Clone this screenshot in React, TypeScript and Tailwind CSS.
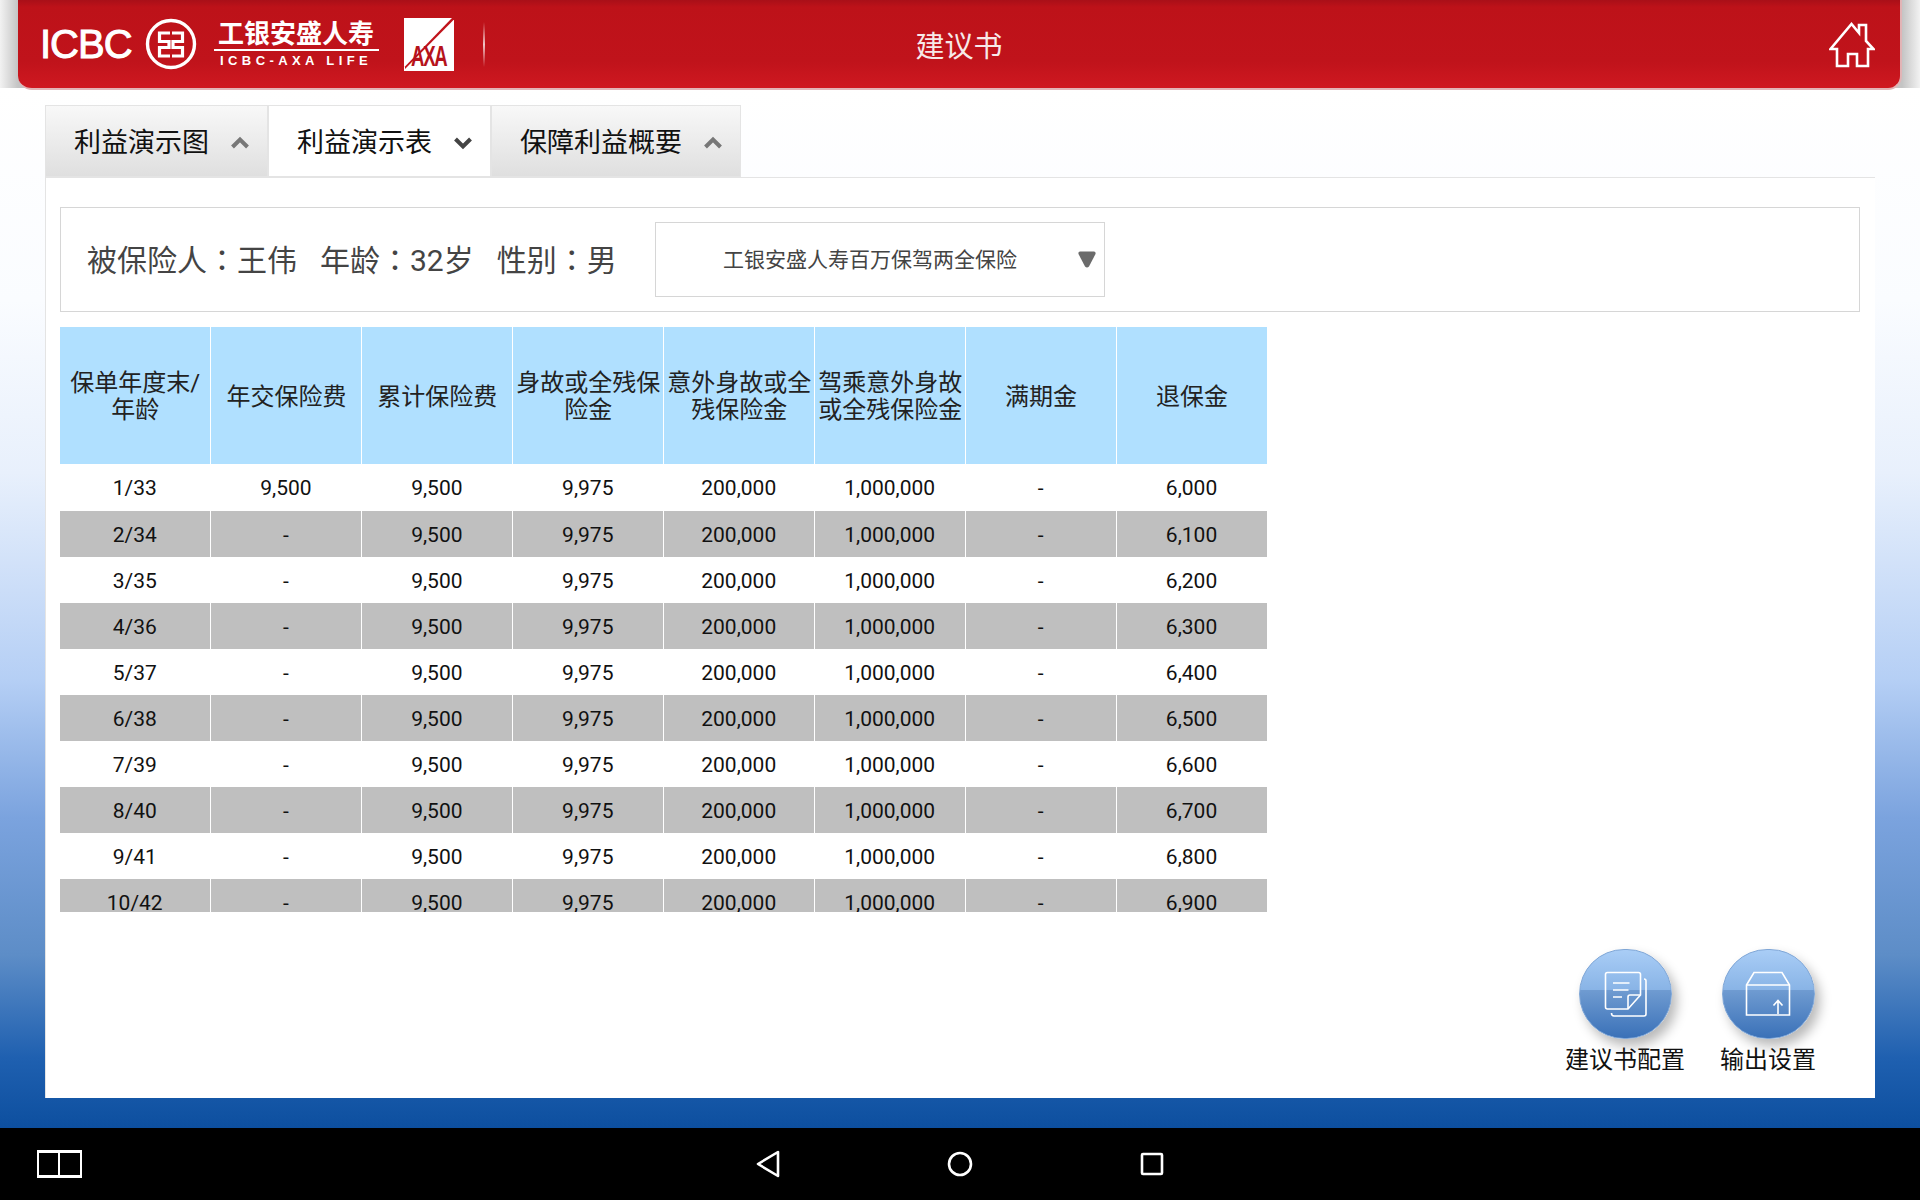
const cjk = "font-['Roboto','Noto_Sans_CJK_SC',sans-serif]";

const columns = [
  <>保单年度末/<br />年龄</>,
  "年交保险费",
  "累计保险费",
  "身故或全残保险金",
  "意外身故或全残保险金",
  "驾乘意外身故或全残保险金",
  "满期金",
  "退保金",
];

const rows = Array.from({ length: 10 }, (_, i) => [
  `${i + 1}/${i + 33}`,
  i === 0 ? "9,500" : "-",
  "9,500",
  "9,975",
  "200,000",
  "1,000,000",
  "-",
  (6000 + i * 100).toLocaleString("en-US"),
]);

const tabs = [
  { label: "利益演示图", active: false, w: "w-[223px]" },
  { label: "利益演示表", active: true, w: "w-[223px]" },
  { label: "保障利益概要", active: false, w: "w-[250px]" },
];

function Chevron({ down }: { down: boolean }) {
  return (
    <svg width="20" height="14" viewBox="0 0 20 14" className={down ? "text-[#444]" : "text-[#777]"}>
      <path d={down ? "M2.5 3 10 10.500 17.500 3" : "M2.5 11 10 3.500 17.500 11"} fill="none" stroke="currentColor" strokeWidth="4" />
    </svg>
  );
}

function IcbcSeal() {
  return (
    <svg width="52" height="52" viewBox="0 0 52 52" fill="none" stroke="white">
      <circle cx="26" cy="26" r="23.5" strokeWidth="3.4" />
      <path d="M25 15H14.500V23.500H24V29.500H14.500V38H25M27 15H37.500V23.500H28V29.500H37.500V38H27" strokeWidth="3.2" />
    </svg>
  );
}

function HomeIcon() {
  return (
    <svg width="46" height="46" viewBox="0 0 46 46" fill="none" stroke="white" strokeWidth="2.6" className="mt-[2px]">
      <path d="M1.5 27 22.500 2 30 11V3H37V19L44.500 27 39 27V44H28V32H19V44H8V27Z" />
    </svg>
  );
}

function NotesIcon() {
  return (
    <svg width="46" height="46" viewBox="0 0 46 46" fill="none" stroke="white" strokeWidth="1.6">
      <path d="M3.500 3.500Q3.500 1.500 5.500 1.500H36.500Q38.500 1.500 38.500 3.500V24L26 38H5.500Q3.500 38 3.500 36Z" />
      <path d="M38.500 24H28Q26 24 26 26V38" />
      <path d="M42 8Q44 8 44 10V43Q44 45 42 45H12Q9.500 45 9.500 42" />
      <path d="M11 12H27.500M11 19H26.500M11 26H20" />
    </svg>
  );
}

function BoxIcon() {
  return (
    <svg width="46" height="46" viewBox="0 0 46 46" fill="none" stroke="white" strokeWidth="1.6">
      <path d="M1.500 14 9 1.500H37L44.500 14V44H1.500Z" />
      <path d="M1.500 14H44.500" />
      <path d="M33 43V30M28.500 34.500 33 29.500 37.500 34.500" />
    </svg>
  );
}

function ActionButton({ label, children }: { label: string; children: React.ReactNode }) {
  return (
    <div className="flex flex-col items-center">
      <div className="flex h-[90px] w-[93px] items-center justify-center rounded-full border border-[#7fa6d6] bg-[linear-gradient(180deg,#a9cdf6_0%,#89b4e6_45%,#6f9bd1_46%,#3a71b8_100%)] shadow-[5px_7px_12px_rgba(0,0,0,0.28)]">
        {children}
      </div>
      <span className="mt-[6px] text-[24px] leading-[30px] text-[#111]">{label}</span>
    </div>
  );
}

export default function App() {
  return (
    <div className={`${cjk} flex h-[1200px] w-[1920px] flex-col overflow-hidden bg-[linear-gradient(180deg,#ffffff_88px,#fafcff_300px,#e8f0fc_473px,#b5cff5_680px,#7ba3de_818px,#5d8dc7_955px,#1f60b0_1058px,#0d4f9f_1128px)]`}>
      {/* top bar */}
      <div className="h-[88px] shrink-0 bg-[linear-gradient(90deg,#f2f2f2_0px,#c4c4c4_18px,#c4c4c4_1902px,#f2f2f2_1920px)] px-[18px]">
        <header className="relative flex h-[90px] items-center rounded-b-[14px] border-b-2 border-r-2 border-[#e2b4b6] bg-[linear-gradient(180deg,#a90f18_0%,#bd1219_8%,#c0131b_70%,#cf1820_100%)]">
          <div className="ml-[22px] flex items-center">
            <span className="font-['Liberation_Sans',sans-serif] text-[40px] leading-none tracking-[-1px] text-white [-webkit-text-stroke:1px_white]">ICBC</span>
            <div className="ml-[13px]"><IcbcSeal /></div>
            <div className="ml-[17px] flex w-[165px] flex-col items-center text-white">
              <span className="text-[26px] font-bold leading-[29px]">工银安盛人寿</span>
              <span className="h-[2px] w-full bg-white" />
              <span className="mt-[3px] font-['Liberation_Sans',sans-serif] text-[13px] font-bold leading-[14px] tracking-[4.4px]">ICBC-AXA LIFE</span>
            </div>
            <div className="relative ml-[25px] h-[53px] w-[50px] overflow-hidden bg-white">
              <svg width="50" height="53" viewBox="0 0 50 53" className="absolute inset-0">
                <path d="M50 0V1.500L1 51V48.500L48 0Z" fill="#c0131b" />
              </svg>
              <span className="absolute left-[7px] top-[23px] origin-left scale-x-[0.62] font-['Liberation_Sans',sans-serif] text-[30px] font-bold leading-[30px] tracking-[-2px] text-[#b5121b]">AXA</span>
            </div>
            <div className="ml-[29px] h-[45px] w-[2px] bg-[linear-gradient(180deg,rgba(255,255,255,0)_0%,rgba(255,255,255,0.75)_50%,rgba(255,255,255,0)_100%)]" />
          </div>
          <h1 className="absolute left-1/2 top-[25px] -translate-x-1/2 text-[29px] font-normal leading-[44px] text-[#f7e9e9]">建议书</h1>
          <div className="ml-auto mr-[25px]"><HomeIcon /></div>
        </header>
      </div>

      <main className="mx-[45px] mt-[17px] flex min-h-0 flex-1 flex-col">
        <div className="flex h-[72px] shrink-0">
          {tabs.map((t) => (
            <div
              key={t.label}
              className={`${t.w} flex items-center justify-between border border-[#e4e4e4] pl-[28px] pr-[17px] pt-[4px] ${t.active ? "bg-white" : "bg-[linear-gradient(180deg,#f8f8f8_0%,#dfdfdf_100%)]"}`}
            >
              <span className="text-[27px] leading-none text-[#111]">{t.label}</span>
              <Chevron down={t.active} />
            </div>
          ))}
        </div>

        <section className="flex min-h-0 flex-1 flex-col border-l border-t border-[#e4e4e4] bg-white pl-[14px] pr-[15px] pt-[29px]">
          <div className="flex h-[105px] shrink-0 items-center border border-[#d6d6d6] pl-[26px]">
            <p className="flex w-[531px] gap-[23px] whitespace-nowrap pt-[2px] font-['Roboto','Noto_Sans_CJK_TC',sans-serif] text-[30px] text-[#444]">
              <span>被保险人：王伟</span>
              <span>年龄：32岁</span>
              <span>性别：男</span>
            </p>
            <div className="relative ml-[37px] flex h-[75px] w-[450px] items-center border border-[#d6d6d6] pl-[67px]">
              <span className="pt-[2px] text-[21px] text-[#444]">工银安盛人寿百万保驾两全保险</span>
              <svg width="18" height="17" viewBox="0 0 18 17" className="absolute right-[8px] top-[28px]">
                <path d="M2 0.500H16Q18 0.500 17.500 3L11 15.500Q9 17.500 7 15.500L0.500 3Q0 0.500 2 0.500Z" fill="#6b6b6b" />
              </svg>
            </div>
          </div>

          <div className="mt-[15px] h-[585px] shrink-0 overflow-hidden">
            <table className="w-[1208px] table-fixed border-collapse text-center">
              <thead>
                <tr className="h-[137px] bg-[#b0e0ff]">
                  {columns.map((c, i) => (
                    <th key={i} className="border-r border-white px-[2px] pt-[3px] text-[24px] font-normal leading-[27px] text-[#222]">{c}</th>
                  ))}
                </tr>
              </thead>
              <tbody>
                {rows.map((row, i) => (
                  <tr key={i} className={`${i === 0 ? "h-[47px]" : "h-[46px]"} ${i % 2 ? "bg-[#bfbfbf]" : "bg-white"}`}>
                    {row.map((v, j) => (
                      <td key={j} className="border-r border-white p-0 pr-[1px] pt-[3px] text-[21px] text-[#111]">{v}</td>
                    ))}
                  </tr>
                ))}
              </tbody>
            </table>
          </div>

          <div className="mt-[37px] flex justify-end gap-[35px] pr-[44px]">
            <ActionButton label="建议书配置"><NotesIcon /></ActionButton>
            <ActionButton label="输出设置"><BoxIcon /></ActionButton>
          </div>
        </section>
      </main>

      <div className="h-[30px] shrink-0" />

      {/* android nav bar */}
      <nav className="relative flex h-[72px] shrink-0 items-center justify-center gap-[167px] bg-black">
        <div className="absolute left-[37px] top-[22px] flex h-[28px] w-[45px] border-y-[3px] border-x-2 border-white">
          <span className="h-full w-1/2 border-r-2 border-white" />
        </div>
        <svg width="24" height="28" viewBox="0 0 24 28" fill="none" stroke="white" strokeWidth="2.6">
          <path d="M22 2V26L2 14Z" strokeLinejoin="round" />
        </svg>
        <svg width="26" height="26" viewBox="0 0 26 26" fill="none" stroke="white" strokeWidth="2.6">
          <circle cx="13" cy="13" r="11" />
        </svg>
        <svg width="24" height="24" viewBox="0 0 24 24" fill="none" stroke="white" strokeWidth="2.6">
          <rect x="2" y="2" width="20" height="20" rx="1" />
        </svg>
      </nav>
    </div>
  );
}
